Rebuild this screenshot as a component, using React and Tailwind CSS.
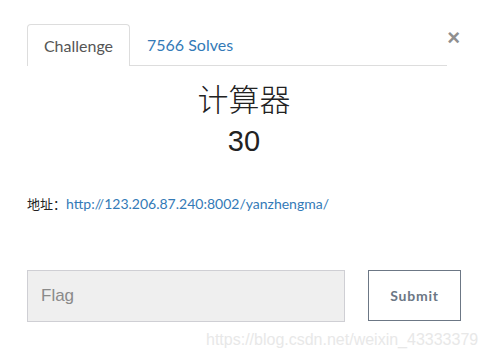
export default function App() {
  return (
    <div className="relative w-[487px] h-[358px] bg-white overflow-hidden pl-[27px] pr-[26px] pt-[24px] font-['Lato','Liberation_Sans',sans-serif]">
      <div className="flex items-start">
        <div className="flex w-[420px] border-b border-[#dddddd]">
          <div className="-mb-px h-[42px] w-[103px] flex items-center justify-center rounded-t-[4px] border border-b-0 border-[#dddddd] bg-white text-[16px] text-[#555555]">
            Challenge
          </div>
          <div className="h-[41px] flex items-center pl-[17px] text-[16px] text-[#337ab7]">
            7566 Solves
          </div>
        </div>
        <button className="ml-auto mt-[3px] mr-[1px] text-[22px] leading-none font-bold text-[#8f8f8f] font-['Liberation_Sans',sans-serif]">
          ×
        </button>
      </div>

      <div className="text-center text-[#222222] font-['Liberation_Sans','Noto_Sans_CJK_SC',sans-serif]">
        <h2 className="mt-[16px] text-[31px] leading-[38px] font-light">计算器</h2>
        <h3 className="mt-[4px] text-[29px] leading-[34px]">30</h3>
      </div>

      <p className="mt-[35px] text-[13px] text-[#222222] font-['Lato','Noto_Sans_CJK_SC',sans-serif]">
        地址：<a className="text-[14px] text-[#337ab7]" href="#">http://123.206.87.240:8002/yanzhengma/</a>
      </p>

      <div className="mt-[55px] flex gap-[23px]">
        <div className="w-[318px] h-[52px] flex items-center px-[13px] bg-[#efefef] border border-[#cfcfd4] text-[17px] text-[#8a8a8a] font-['Liberation_Sans',sans-serif]">
          Flag
        </div>
        <button className="w-[93px] h-[51px] border border-[#6c7785] text-[14px] font-bold tracking-[0.8px] text-[#6c7785]">
          Submit
        </button>
      </div>

      <div className="absolute left-[206px] top-[328px] text-[16px] text-[#e8e8e8] font-['Liberation_Sans',sans-serif]">
        https://blog.csdn.net/weixin_43333379
      </div>
    </div>
  );
}
